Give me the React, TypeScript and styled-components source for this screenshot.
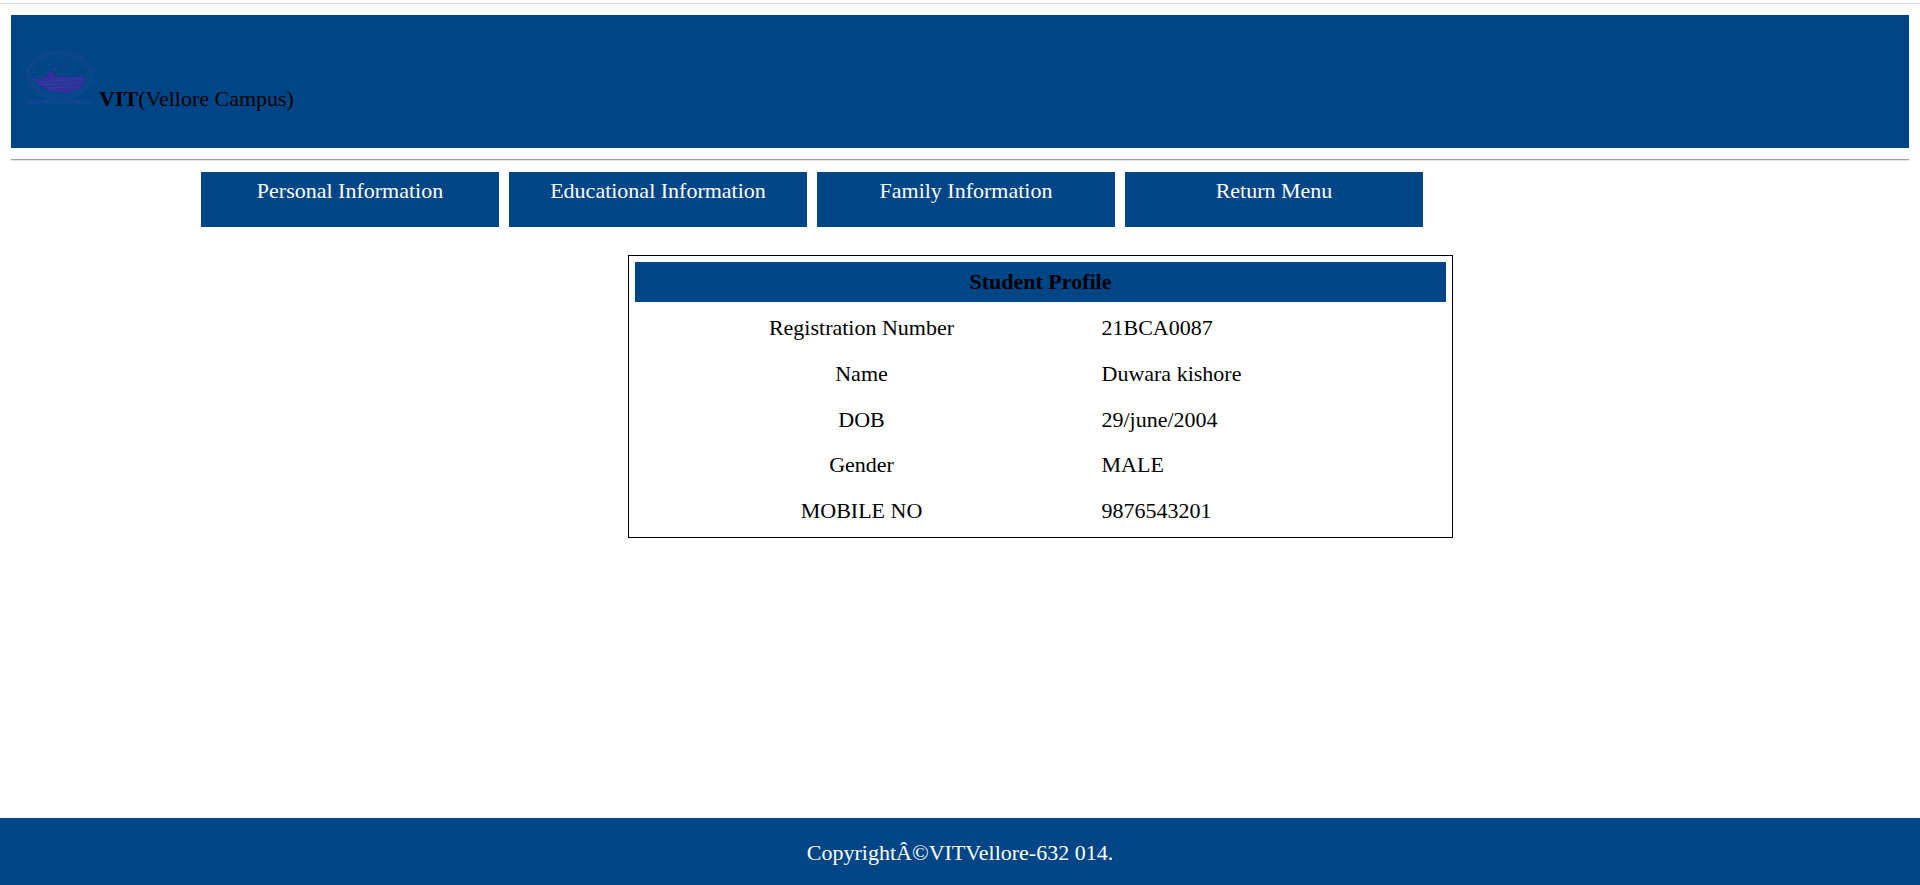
import React from "react";
import styled, { createGlobalStyle } from "styled-components";

const BLUE = "#004687";

const Global = createGlobalStyle`
  html, body { margin: 0; padding: 0; background: #fff; }
  body { font-family: "Liberation Serif", "Times New Roman", serif; font-size: 22px; color: #000; }
`;

const Page = styled.div`
  height: 885px;
  display: flex;
  flex-direction: column;
  overflow: hidden;
`;

const TopRule = styled.div`
  height: 1px;
  margin-top: 3px;
  background: #dcdcdc;
`;

const Content = styled.main`
  flex: 1;
  padding: 11px 11px 0;
`;

const Banner = styled.header`
  height: 133px;
  background: ${BLUE};
  padding: 35px 0 0 14px;
  box-sizing: border-box;
  line-height: 25px;
`;

const LogoSvg = styled.svg`
  display: inline-block;
  width: 69px;
  height: 56px;
  vertical-align: baseline;
  margin-right: 5px;
`;

const Divider = styled.hr`
  border: 0;
  border-top: 1px solid #a0a0a0;
  border-bottom: 1px solid #e4e4e4;
  margin: 11px 0 11px;
  box-sizing: border-box;
  height: 2px;
`;

const Nav = styled.nav`
  display: flex;
  gap: 10px;
  padding-left: 190px;
`;

const NavButton = styled.a`
  width: 298px;
  height: 55px;
  background: ${BLUE};
  color: #fff;
  text-align: center;
  padding-top: 6px;
  box-sizing: border-box;
  line-height: 25px;
`;

const ProfileCard = styled.section`
  width: 825px;
  height: 283px;
  margin: 28px 0 0 617px;
  border: 1px solid #000;
  box-sizing: border-box;
  padding: 6px;
`;

const ProfileTitle = styled.h2`
  margin: 0;
  height: 40px;
  width: 811px;
  background: ${BLUE};
  font-size: 22px;
  font-weight: 700;
  line-height: 40px;
  text-align: center;
`;

const Rows = styled.div`
  display: grid;
  grid-template-columns: 453px 1fr;
  grid-auto-rows: 45.8px;
  padding-top: 3px;
`;

const Label = styled.div`
  text-align: center;
  line-height: 46px;
`;

const Value = styled.div`
  line-height: 46px;
  padding-left: 13.5px;
`;

const Footer = styled.footer`
  height: 67px;
  background: ${BLUE};
  color: #fff;
  text-align: center;
  line-height: 70px;
`;

const rows: [string, string][] = [
  ["Registration Number", "21BCA0087"],
  ["Name", "Duwara kishore"],
  ["DOB", "29/june/2004"],
  ["Gender", "MALE"],
  ["MOBILE NO", "9876543201"],
];

const Logo = () => (
  <LogoSvg viewBox="0 0 69 56" aria-hidden="true">
    <ellipse cx="34.5" cy="25" rx="31" ry="22" fill="none" stroke="#164a94" strokeWidth="6" strokeDasharray="1 1.4" />
    <ellipse cx="34.5" cy="25" rx="33.5" ry="24" fill="none" stroke="#2a3f98" strokeWidth="0.8" strokeDasharray="1.2 1.6" />
    <text x="35" y="18" fontSize="8" textAnchor="middle" fill="#26369a" fontFamily="Liberation Serif" letterSpacing="2">VIT</text>
    <path d="M8 29 L20 28 L23 24 L24 21 L28 21 L29 24 L32 27 L60 26 L59 32 L54 39 L42 43 L24 41 L14 35 Z" fill="#35309c" />
    <path d="M12 32 L58 29 M14 35 L56 33 M22 38 L50 37" stroke="#15509c" strokeWidth="0.8" fill="none" />
    <path d="M3 52 H66" stroke="#18489a" strokeWidth="5" strokeDasharray="1.5 1.2" fill="none" />
  </LogoSvg>
);

export default function App() {
  return (
    <Page>
      <Global />
      <TopRule />
      <Content>
        <Banner>
          <Logo />
          <b>VIT</b>(Vellore Campus)
        </Banner>
        <Divider />
        <Nav>
          <NavButton>Personal Information</NavButton>
          <NavButton>Educational Information</NavButton>
          <NavButton>Family Information</NavButton>
          <NavButton>Return Menu</NavButton>
        </Nav>
        <ProfileCard>
          <ProfileTitle>Student Profile</ProfileTitle>
          <Rows>
            {rows.map(([k, v]) => (
              <React.Fragment key={k}>
                <Label>{k}</Label>
                <Value>{v}</Value>
              </React.Fragment>
            ))}
          </Rows>
        </ProfileCard>
      </Content>
      <Footer>CopyrightÂ©VITVellore-632 014.</Footer>
    </Page>
  );
}
